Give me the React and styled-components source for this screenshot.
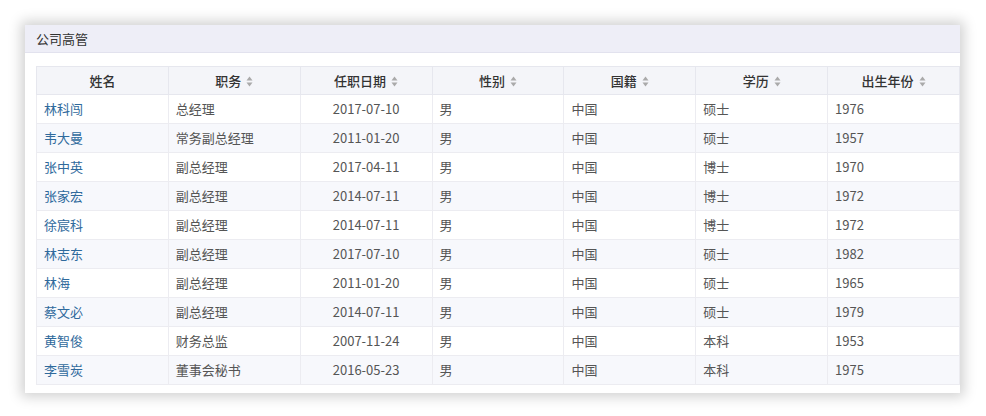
import React from "react";
import styled, { createGlobalStyle } from "styled-components";

const Global = createGlobalStyle`
  body { margin: 0; background: #fff; font-family: "Noto Sans CJK SC", "Liberation Sans", sans-serif; }
`;

const Page = styled.div`
  padding: 25px 26px 26px 25px;
`;

const Card = styled.div`
  background: #fff;
  box-shadow: 0 0 12px 4px rgba(0, 0, 0, 0.18);
  padding-bottom: 8px;
`;

const Title = styled.div`
  background: #eeeef7;
  border-bottom: 1px solid #e2e2ee;
  height: 27px;
  line-height: 27px;
  padding-left: 11px;
  font-size: 13px;
  color: #333;
`;

const Body = styled.div`
  padding: 13px 0 0 11px;
`;

const Table = styled.table`
  width: 100%;
  border-collapse: collapse;
  font-size: 13px;
  line-height: 16px;
  color: #555;
  table-layout: fixed;
`;

const Th = styled.th`
  height: 27px;
  padding: 0;
  background: #f4f5f9;
  border: 1px solid #e6e7ee;
  font-weight: 500;
  color: #333;
  text-align: center;
`;

const Sort = styled.svg`
  margin-left: 5px;
  vertical-align: -1px;
`;

const Tr = styled.tr`
  background: ${(p) => (p.$odd ? "#f7f8fc" : "#fff")};
`;

const Td = styled.td`
  height: 28px;
  border: 1px solid #ececf1;
  padding: 0 7px;
  text-align: ${(p) => p.$align || "left"};
`;

const Link = styled.span`
  color: #2f6a9c;
`;

const cols = ["姓名", "职务", "任职日期", "性别", "国籍", "学历", "出生年份"];

const rows = [
  ["林科闯", "总经理", "2017-07-10", "硕士", "1976"],
  ["韦大曼", "常务副总经理", "2011-01-20", "硕士", "1957"],
  ["张中英", "副总经理", "2017-04-11", "博士", "1970"],
  ["张家宏", "副总经理", "2014-07-11", "博士", "1972"],
  ["徐宸科", "副总经理", "2014-07-11", "博士", "1972"],
  ["林志东", "副总经理", "2017-07-10", "硕士", "1982"],
  ["林海", "副总经理", "2011-01-20", "硕士", "1965"],
  ["蔡文必", "副总经理", "2014-07-11", "硕士", "1979"],
  ["黄智俊", "财务总监", "2007-11-24", "本科", "1953"],
  ["李雪炭", "董事会秘书", "2016-05-23", "本科", "1975"],
];

const SortIcon = () => (
  <Sort width="7" height="11" viewBox="0 0 7 11">
    <path d="M3.5 0.5L6.5 4.5H0.5Z M3.5 10.5L0.5 6.5H6.5Z" fill="#aaa" />
  </Sort>
);

export default function App() {
  return (
    <Page>
      <Global />
      <Card>
        <Title>公司高管</Title>
        <Body>
          <Table>
            <thead>
              <tr>
                {cols.map((c, i) => (
                  <Th key={c}>
                    {c}
                    {i > 0 && <SortIcon />}
                  </Th>
                ))}
              </tr>
            </thead>
            <tbody>
              {rows.map((r, i) => (
                <Tr key={r[0]} $odd={i % 2 === 1}>
                  <Td><Link>{r[0]}</Link></Td>
                  <Td>{r[1]}</Td>
                  <Td $align="center">{r[2]}</Td>
                  <Td>男</Td>
                  <Td>中国</Td>
                  <Td>{r[3]}</Td>
                  <Td>{r[4]}</Td>
                </Tr>
              ))}
            </tbody>
          </Table>
        </Body>
      </Card>
    </Page>
  );
}
